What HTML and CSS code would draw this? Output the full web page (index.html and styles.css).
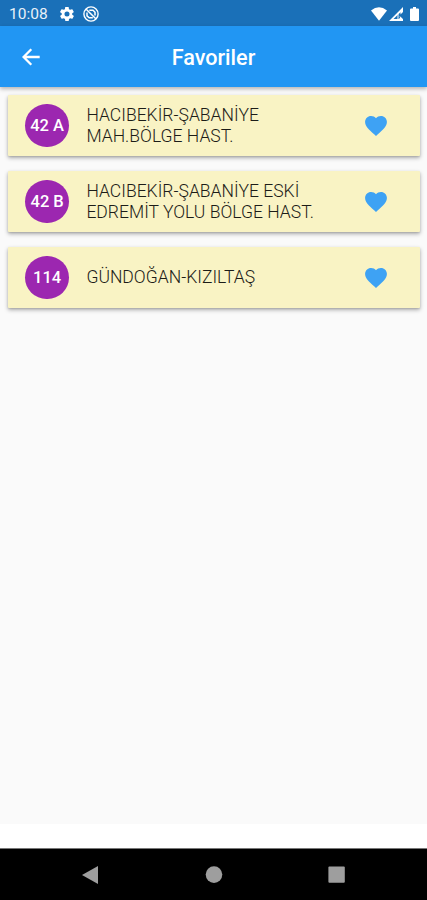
FILE: index.html
```html
<!DOCTYPE html>
<html lang="tr">
<head>
<meta charset="utf-8">
<title>Favoriler</title>
<link rel="stylesheet" href="styles.css">
</head>
<body>
<div class="status">
  <span class="time">10:08</span>
  <svg class="gear" viewBox="2 2 20 20"><path fill="#fff" fill-rule="evenodd" d="M19.4 13a7 7 0 0 0 0-2l2.1-1.6c.2-.2.2-.4.1-.7l-2-3.4c-.1-.2-.4-.3-.6-.2l-2.5 1a7 7 0 0 0-1.7-1l-.4-2.6c0-.3-.2-.5-.5-.5h-4c-.2 0-.4.2-.5.5L9 5.1a7 7 0 0 0-1.700 1l-2.500-1c-.2-.1-.5 0-.6.2l-2 3.400c-.1.300-.1.500.1.700L4.500 11a7 7 0 0 0 0 2l-2.100 1.600c-.2.200-.2.400-.1.700l2 3.400c.1.200.4.300.6.200l2.500-1a7 7 0 0 0 1.700 1l.4 2.600c.1.300.3.500.5.500h4c.3 0 .5-.2.500-.5l.4-2.600a7 7 0 0 0 1.700-1l2.500 1c.2.100.5 0 .6-.2l2-3.400c.1-.3.100-.5-.1-.7zM12 15.600a3.600 3.600 0 1 1 0-7.200 3.600 3.600 0 0 1 0 7.200z"/></svg>
  <svg class="sync" viewBox="0 0 16 16" fill="none" stroke="#fff"><circle cx="8" cy="8" r="7.100" stroke-width="1.400"/><path stroke-width="1.500" d="M3.200 3.200l9.600 9.600M6.300 4.200h3.700l2 2v3.200M4 6.600v3.200l2.200 2h3.600"/></svg>
  <svg class="wifi" viewBox="0 0 16 14"><path fill="#fff" d="M0 3.500Q8-2.800 16 3.500L8 13.700z"/></svg>
  <svg class="signal" viewBox="0 0 14 14"><path fill="#fff" fill-rule="evenodd" d="M14 0v5l-2.500 2.500V5.200L4.500 12H10l1.500-2L14 12v2H0z"/><path d="M9 6.500v6M11 9.500l2.500 3.500" stroke="#fff"/></svg>
  <svg class="battery" viewBox="0 0 9 14"><path fill="#fff" d="M3 0h3v1.500h2q1 0 1 1V13q0 1-1 1H1q-1 0-1-1V2.500q0-1 1-1h2z"/></svg>
</div>
<header class="bar">
  <svg class="back" viewBox="0 0 18 18" fill="none" stroke="#fff" stroke-width="2.300"><path d="M17.700 9H2M9.300 1.200L1.600 9l7.700 7.800"/></svg>
  <h1>Favoriler</h1>
</header>
<main class="list">
  <article class="card">
    <span class="badge">42 A</span>
    <p>HACIBEKİR-ŞABANİYE<br>MAH.BÖLGE HAST.</p>
    <svg class="heart" viewBox="2 3 20 18.350"><path d="M12 21.350l-1.450-1.320C5.400 15.360 2 12.280 2 8.500 2 5.420 4.420 3 7.500 3c1.740 0 3.410.81 4.500 2.090C13.090 3.810 14.760 3 16.500 3 19.580 3 22 5.420 22 8.500c0 3.780-3.400 6.860-8.550 11.540z"/></svg>
  </article>
  <article class="card">
    <span class="badge">42 B</span>
    <p>HACIBEKİR-ŞABANİYE ESKİ<br>EDREMİT YOLU BÖLGE HAST.</p>
    <svg class="heart" viewBox="2 3 20 18.350"><path d="M12 21.350l-1.450-1.320C5.400 15.360 2 12.280 2 8.500 2 5.420 4.420 3 7.500 3c1.740 0 3.410.81 4.500 2.090C13.090 3.810 14.760 3 16.500 3 19.580 3 22 5.420 22 8.500c0 3.780-3.400 6.860-8.550 11.540z"/></svg>
  </article>
  <article class="card">
    <span class="badge">114</span>
    <p>GÜNDOĞAN-KIZILTAŞ</p>
    <svg class="heart" viewBox="2 3 20 18.350"><path d="M12 21.350l-1.450-1.320C5.400 15.360 2 12.280 2 8.500 2 5.420 4.420 3 7.500 3c1.740 0 3.410.81 4.500 2.090C13.090 3.810 14.760 3 16.500 3 19.580 3 22 5.420 22 8.500c0 3.780-3.400 6.860-8.550 11.540z"/></svg>
  </article>
</main>
<div class="banner"></div>
<nav class="nav">
  <svg viewBox="0 0 18 20"><path d="M0 10L16 1v18z"/></svg>
  <svg viewBox="0 0 18 20"><circle cx="9" cy="9.600" r="8.300"/></svg>
  <svg viewBox="0 0 18 20"><rect x=".4" y="1.400" width="16.400" height="16.400" rx="1"/></svg>
</nav>
</body>
</html>
```
FILE: styles.css
```css
* { box-sizing: border-box; }
body {
  margin: 0;
  height: 900px;
  display: flex;
  flex-direction: column;
  overflow: hidden;
  background: #fafafa;
  font-family: Roboto, sans-serif;
}
svg { display: block; flex: none; }
.status {
  height: 26px;
  flex: none;
  display: flex;
  align-items: center;
  padding: 1px 8px 0 9px;
  background: #1a70b8;
}
.time { width: 51px; font-size: 15.500px; line-height: 26px; color: #e8f1f8; }
.gear { width: 14px; height: 14px; }
.sync { width: 16px; height: 16px; margin-left: 9px; }
.wifi { width: 16px; height: 14px; margin-left: auto; }
.signal { width: 14px; height: 14px; margin-left: 2px; }
.battery { width: 9px; height: 14px; margin-left: 7px; }
.bar {
  height: 61px;
  flex: none;
  display: grid;
  grid-template-columns: 23px 1fr 23px;
  align-items: center;
  background: #2196f3;
  box-shadow: 0 2px 4px rgba(0, 0, 0, .28);
  z-index: 1;
}
.back { width: 18px; height: 18px; margin-left: 22px; }
.bar h1 {
  margin: 3px 0 0;
  font-size: 21.600px;
  font-weight: 500;
  line-height: 28px;
  text-align: center;
  color: #fff;
}
.list {
  flex: 1;
  display: flex;
  flex-direction: column;
  gap: 15px;
  padding: 8px 7px 0 8px;
}
.card {
  height: 61px;
  display: flex;
  align-items: center;
  padding: 0 33px 1px 17.400px;
  background: #f9f3c4;
  border-radius: 1px;
  box-shadow: 0 2px 4px rgba(0, 0, 0, .3), 0 1px 2px rgba(0, 0, 0, .12);
}
.badge {
  width: 43.500px;
  height: 43.500px;
  flex: none;
  margin-top: .8px;
  border-radius: 50%;
  background: #9c27b0;
  color: #fff;
  font-size: 16.500px;
  font-weight: 500;
  line-height: 44px;
  text-align: center;
}
.card p {
  margin: 1px 0 0 17.500px;
  font-size: 17.550px;
  font-weight: 300;
  line-height: 21px;
  white-space: nowrap;
  color: #1c1c18;
}
.heart { width: 22px; height: 20px; margin: 1px 0 0 auto; fill: #3ea2f4; }
.banner { height: 24px; flex: none; background: #fff; }
.nav {
  height: 52px;
  flex: none;
  display: flex;
  justify-content: center;
  align-items: center;
  gap: 105px;
  background: #000;
  border-top: 1px solid #777;
}
.nav svg { width: 18px; height: 20px; fill: #9e9e9e; }
```
